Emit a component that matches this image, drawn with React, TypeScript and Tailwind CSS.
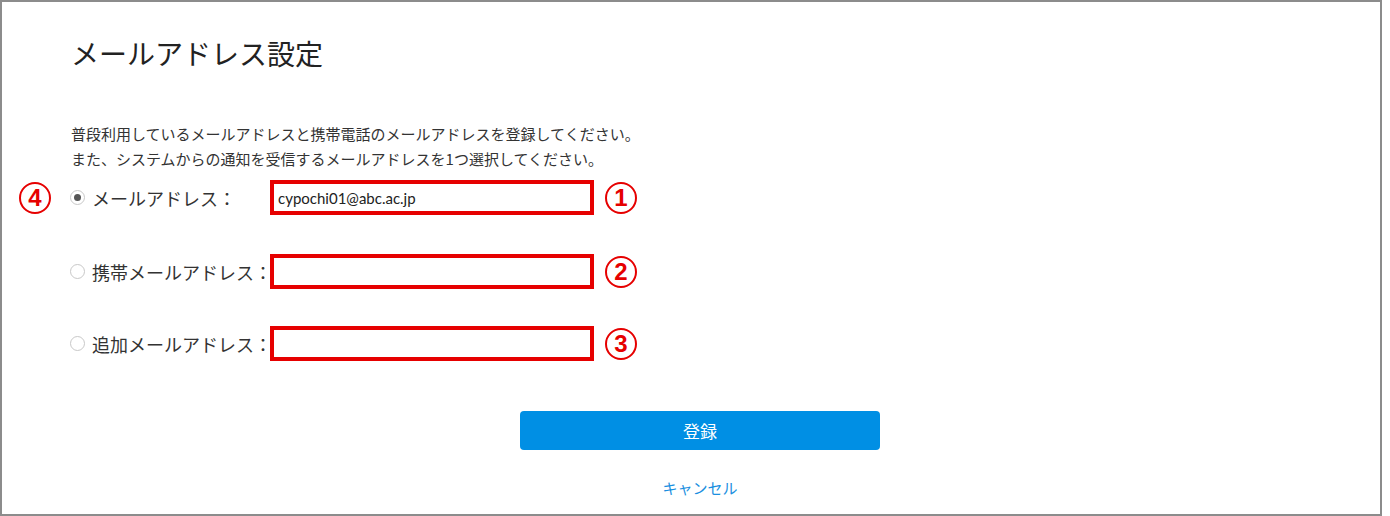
import { useState } from "react";

type Row = {
  id: string;
  label: string;
  value: string;
  mark: string;
  note?: string;
  mt: string;
};

const rows: Row[] = [
  { id: "main", label: "メールアドレス：", value: "cypochi01@abc.ac.jp", mark: "1", note: "4", mt: "mt-[9px]" },
  { id: "mobile", label: "携帯メールアドレス：", value: "", mark: "2", mt: "mt-[39px]" },
  { id: "extra", label: "追加メールアドレス：", value: "", mark: "3", mt: "mt-[37px]" },
];

function Mark({ n }: { n: string }) {
  return (
    <div className="w-[32px] h-[32px] rounded-full border-2 border-[#e60000] flex items-center justify-center text-[#e60000] text-[24px] font-bold leading-none font-['Liberation_Sans',sans-serif]">
      {n}
    </div>
  );
}

export default function App() {
  const [selected, setSelected] = useState("main");

  return (
    <div className="w-[1390px] h-[516px] bg-white font-['Noto_Sans_CJK_JP',sans-serif] text-[#333]">
      <div className="w-[1382px] h-[516px] border-2 border-[#8c8c8c] bg-white flex flex-col">
        {/* タイトル */}
        <h1 className="pl-[69px] pt-[31px] text-[28px] leading-[40px] font-normal text-[#222]">
          メールアドレス設定
        </h1>

        {/* 説明 */}
        <div className="pl-[69px] mt-[48px] text-[15px] leading-[25px]">
          <p>普段利用しているメールアドレスと携帯電話のメールアドレスを登録してください。</p>
          <p>また、システムからの通知を受信するメールアドレスを1つ選択してください。</p>
        </div>

        {/* 入力欄 */}
        {rows.map((r) => (
          <div key={r.id} className={`${r.mt} flex items-center pl-[17px] h-[35px]`}>
            <div className="w-[51px] flex items-center">{r.note && <Mark n={r.note} />}</div>
            <button
              onClick={() => setSelected(r.id)}
              className="w-[15px] h-[15px] rounded-full border border-[#c8c8c8] bg-white flex items-center justify-center"
            >
              {selected === r.id && <span className="w-[7px] h-[7px] rounded-full bg-[#555]" />}
            </button>
            <label className="ml-[7px] w-[178px] text-[18px] leading-[24px] whitespace-nowrap">{r.label}</label>
            <div className="w-[324px] h-[35px] border-4 border-[#e60000] bg-white flex items-center">
              <input
                defaultValue={r.value}
                className="w-full h-full px-[4px] text-[15px] text-[#222] outline-none font-['Lato','Noto_Sans_CJK_JP',sans-serif]"
              />
            </div>
            <div className="ml-[11px]">
              <Mark n={r.mark} />
            </div>
          </div>
        ))}

        {/* ボタン */}
        <div className="mt-[50px] flex justify-center pl-[18px]">
          <button className="w-[360px] h-[39px] rounded-[4px] bg-[#008fe4] text-white text-[17px]">登録</button>
        </div>
        <div className="mt-[26px] flex justify-center pl-[18px]">
          <a className="text-[15px] leading-[24px] text-[#1a8fe0] cursor-pointer">キャンセル</a>
        </div>
      </div>
    </div>
  );
}
